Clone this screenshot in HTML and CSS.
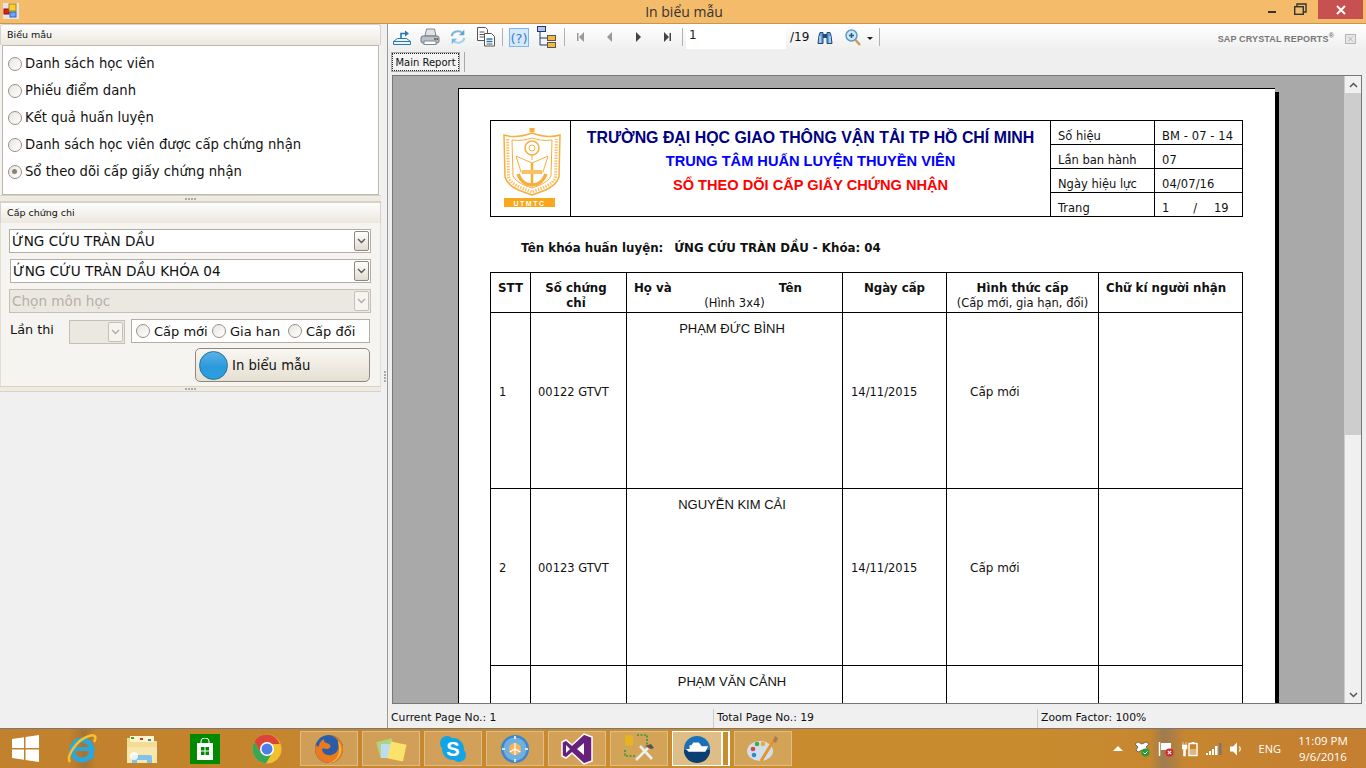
FILE: index.html
```html
<!DOCTYPE html>
<html lang="en">
<head>
  <meta charset="UTF-8" />
  <title>In biểu mẫu</title>
  <link rel="stylesheet" href="styles.css">
</head>
<body>
<div class="app">

  <!-- Title bar -->
  <div class="titlebar">
    <svg class="app-icon" width="16" height="16" viewBox="0 0 16 16"><rect x="0" y="0" width="16" height="16" fill="#e4e4e8"/><rect x="1" y="6" width="5" height="5" fill="#d22" stroke="#811"/><rect x="6" y="1" width="7" height="7" fill="#fc3" stroke="#a80"/><rect x="7" y="9" width="6" height="5" fill="#6af" stroke="#36a"/></svg>
    <div class="title">In biểu mẫu</div>
    <div class="win-btns">
      <svg class="win-min" width="26" height="20" viewBox="0 0 26 20"><rect x="9" y="11" width="8" height="2" fill="#333"/></svg>
      <svg class="win-max" width="26" height="20" viewBox="0 0 26 20"><path d="M10 7V4h9v8h-3" fill="none" stroke="#333" stroke-width="1.4"/><rect x="7.7" y="6.7" width="8.6" height="7.6" fill="none" stroke="#333" stroke-width="1.4"/></svg>
      <div class="win-close"><svg width="12" height="12" viewBox="0 0 12 12"><path d="M2 2l8 8M10 2l-8 8" stroke="#fff" stroke-width="2"/></svg></div>
    </div>
  </div>

  <div class="workspace">
    <!-- Left column -->
    <div class="sidebar">
      <div class="group-head">Biểu mẫu</div>
      <div class="form-list">
        <label class="radio-row"><span class="radio"></span>Danh sách học viên</label>
        <label class="radio-row"><span class="radio"></span>Phiếu điểm danh</label>
        <label class="radio-row"><span class="radio"></span>Kết quả huấn luyện</label>
        <label class="radio-row"><span class="radio"></span>Danh sách học viên được cấp chứng nhận</label>
        <label class="radio-row"><span class="radio checked"></span>Sổ theo dõi cấp giấy chứng nhận</label>
      </div>
      <div class="splitter"><i></i><i></i><i></i><i></i></div>

      <div class="group-head second">Cấp chứng chi</div>
      <div class="cert-body">
        <div class="combo">ỨNG CỨU TRÀN DẦU<span class="combo-btn"><svg width="9" height="6" viewBox="0 0 9 6"><path d="M1 1l3.5 3.5L8 1" fill="none" stroke="#555" stroke-width="1.3"/></svg></span></div>
        <div class="combo second-combo">ỨNG CỨU TRÀN DẦU KHÓA 04<span class="combo-btn"><svg width="9" height="6" viewBox="0 0 9 6"><path d="M1 1l3.5 3.5L8 1" fill="none" stroke="#555" stroke-width="1.3"/></svg></span></div>
        <div class="combo disabled">Chọn môn học<span class="combo-btn"><svg width="9" height="6" viewBox="0 0 9 6"><path d="M1 1l3.5 3.5L8 1" fill="none" stroke="#aaa" stroke-width="1.3"/></svg></span></div>
        <div class="exam-row">
          <span class="exam-label">Lần thi</span>
          <div class="combo disabled small"><span class="combo-btn"><svg width="9" height="6" viewBox="0 0 9 6"><path d="M1 1l3.5 3.5L8 1" fill="none" stroke="#aaa" stroke-width="1.3"/></svg></span></div>
          <div class="kind-box">
            <label class="kind"><span class="radio"></span>Cấp mới</label>
            <label class="kind"><span class="radio"></span>Gia han</label>
            <label class="kind"><span class="radio"></span>Cấp đổi</label>
          </div>
        </div>
        <div class="print-row">
          <button class="print-btn"><span class="orb"></span>In biểu mẫu</button>
        </div>
      </div>
      <div class="splitter last"><i></i><i></i><i></i><i></i></div>
    </div>

    <div class="vsplit"><i></i><i></i><i></i><i></i></div>

    <!-- Crystal report viewer -->
    <div class="viewer">
      <div class="toolbar">
        <span class="tool"><svg width="20" height="18" viewBox="0 0 20 18"><path d="M1.5 16.5h17v-3l-4-3h-9l-4 3z" fill="#eaf4fb" stroke="#2a78b0"/><path d="M1.5 13.5h17" stroke="#2a78b0"/><path d="M9 11V5.5h5" fill="none" stroke="#2a78b0" stroke-width="1.6"/><path d="M13 2.5l4 3-4 3z" fill="#2a78b0"/></svg></span>
        <span class="tool"><svg width="20" height="18" viewBox="0 0 20 18"><path d="M5 8l1.5-7h8L16 8z" fill="#dfe3e8" stroke="#7b8792"/><rect x="1" y="8" width="18" height="7" rx="2" fill="#b9c1c9" stroke="#6d7780"/><rect x="4" y="13" width="12" height="3.5" fill="#fff" stroke="#7b8792"/><rect x="14" y="10" width="2" height="2" fill="#3a9a48"/><rect x="16.5" y="10" width="1.5" height="2" fill="#c33"/></svg></span>
        <span class="tool"><svg width="18" height="18" viewBox="0 0 20 18"><path d="M3 8a7 6 0 0 1 12-3.5" fill="none" stroke="#7db8de" stroke-width="2.4"/><path d="M17 1v6h-6z" fill="#5fa3cf"/><path d="M17 10a7 6 0 0 1-12 3.5" fill="none" stroke="#a6d2ec" stroke-width="2.4"/><path d="M3 17v-6h6z" fill="#7db8de"/></svg></span>
        <span class="tool"><svg width="20" height="20" viewBox="0 0 20 20"><path d="M1.500.5h8l2 2v11h-10z" fill="#fff" stroke="#555"/><path d="M3.500 5h5M3.500 7.500h5M3.500 10h5" stroke="#555"/><path d="M8.500 6.500h7l3 3v9.500h-10z" fill="#fff" stroke="#555"/><path d="M10.500 12h6M10.500 14.500h6" stroke="#2a78b0" stroke-width="1.4"/><path d="M10.500 17h6" stroke="#555"/></svg></span>
        <span class="sep"></span>
        <span class="help-btn"><svg width="18" height="17" viewBox="0 0 18 17"><text x="9" y="14" text-anchor="middle" class="help-glyph">(?)</text></svg></span>
        <span class="tool tree"><svg width="20" height="22" viewBox="0 0 20 22"><rect x=".5" y=".5" width="8" height="5" fill="#b7c6e4" stroke="#1f3a6e"/><path d="M3 6v13h7M3 12h7" fill="none" stroke="#1f3a6e"/><rect x="10.500" y="9.500" width="8" height="5" fill="#f5b93f" stroke="#555"/><rect x="10.500" y="16.500" width="8" height="5" fill="#f5b93f" stroke="#555"/></svg></span>
        <span class="sep tree-sep"></span>
        <span class="nav n-first"><svg width="8" height="10" viewBox="0 0 8 10"><path d="M0 1h1.500v8H0zM7 0v10L2 5z" fill="#9a9a9a"/></svg></span>
        <span class="nav"><svg width="8" height="10" viewBox="0 0 8 10"><path d="M6 0v10L1 5z" fill="#9a9a9a"/></svg></span>
        <span class="nav"><svg width="8" height="10" viewBox="0 0 8 10"><path d="M2 0v10l5-5z" fill="#444"/></svg></span>
        <span class="nav"><svg width="8" height="10" viewBox="0 0 8 10"><path d="M1 0v10l5-5zM6.500 1H8v8H6.500z" fill="#444"/></svg></span>
        <span class="sep nav-sep"></span>
        <span class="page-input">1</span>
        <span class="page-total">/19</span>
        <span class="tool find"><svg width="16" height="15" viewBox="0 0 16 15"><path d="M1 13.500l1-8 1-3h3v11zM15 13.500l-1-8-1-3h-3v11z" fill="#6aa3d6" stroke="#1d4a80"/><path d="M3 6v7M13 6v7" stroke="#cfe4f5" stroke-width="1.200"/><rect x="6" y="4" width="4" height="4" fill="#1d4a80"/></svg></span>
        <span class="tool zoom-tool"><svg width="16" height="17" viewBox="0 0 16 17"><circle cx="6.500" cy="6.500" r="5.500" fill="#cfe6f7" stroke="#5f9cc8" stroke-width="1.500"/><path d="M4 6.500h5M6.500 4v5" stroke="#23598c" stroke-width="1.500"/><path d="M10.500 11l4.500 5" stroke="#d59a4e" stroke-width="2.500"/></svg></span>
        <span class="drop-arrow"></span>
        <span class="sep zoom-sep"></span>
        <span class="brand">SAP CRYSTAL REPORTS<sup>®</sup></span>
        <svg class="close-x" width="11" height="10" viewBox="0 0 11 10"><rect x=".5" y=".5" width="10" height="9" fill="#e8e8e8" stroke="#b5b5b5"/><path d="M3 2.500l5 5M8 2.500l-5 5" stroke="#b5b5b5"/></svg>
      </div>

      <div class="tabs">
        <span class="tab">Main Report</span>
        <span class="tab-sep"></span>
      </div>

      <div class="canvas">
        <div class="scroll-area">
          <div class="page">
            <table class="doc-head">
              <colgroup><col class="c-logo"><col class="c-title"><col class="c-key"><col class="c-val"></colgroup>
              <tr>
                <td rowspan="4" class="logo-cell">
                  <svg width="60" height="80" viewBox="0 0 60 80">
                    <g fill="none" stroke="#f7ae3c">
                      <path d="M2 7c10 3 20 1 28-2 8 3 18 5 28 2l-1 42c-3 10-15 14-27 18C18 63 6 59 3 49z" stroke-width="1.500"/>
                      <path d="M5.500 11l1 38c3 8 13 11 23.500 15 10-4 21-7 23.500-15l1-38" stroke-width="3" stroke-dasharray="1.500 1.200" opacity=".75"/>
                      <path d="M10 12c7 1 14 0 20-2 6 2 13 3 20 2l-1 36c-3 6-10 9-19 12-9-3-16-6-19-12z" stroke-width="1"/>
                      <circle cx="30" cy="20" r="7" stroke-width="1.500"/>
                      <circle cx="30" cy="20" r="3" stroke-width="1"/>
                      <path d="M30 27v5M14 28l16 7 16-7-5 16H19z" stroke-width="1"/>
                      <path d="M16 46c3 8 9 11 14 11s11-3 14-11" stroke-width="3.500"/>
                      <path d="M30 35v22" stroke-width="2.500"/>
                    </g>
                    <path d="M27.500 0h5v4h-5z" fill="#f7ae3c"/>
                    <rect x="20" y="42" width="20" height="4" fill="#f8c265"/>
                    <rect x="2" y="70" width="51" height="9" fill="#f9a81e"/>
                    <text x="27.500" y="77.500" text-anchor="middle" class="logo-text">UTMTC</text>
                  </svg>
                </td>
                <td rowspan="4" class="title-cell">
                  <div class="t1">TRƯỜNG ĐẠI HỌC GIAO THÔNG VẬN TẢI TP HỒ CHÍ MINH</div>
                  <div class="t2">TRUNG TÂM HUẤN LUYỆN THUYỀN VIÊN</div>
                  <div class="t3">SỔ THEO DÕI CẤP GIẤY CHỨNG NHẬN</div>
                </td>
                <td class="key">Số hiệu</td><td class="val">BM - 07 - 14</td>
              </tr>
              <tr><td class="key">Lần ban hành</td><td class="val">07</td></tr>
              <tr><td class="key">Ngày hiệu lực</td><td class="val">04/07/16</td></tr>
              <tr><td class="key">Trang</td><td class="val">1 <span class="slash">/</span> 19</td></tr>
            </table>

            <div class="course"><span>Tên khóa huấn luyện:</span><span>ỨNG CỨU TRÀN DẦU - Khóa: 04</span></div>

            <table class="doc-list">
              <colgroup><col class="l1"><col class="l2"><col class="l3"><col class="l4"><col class="l5"><col class="l6"></colgroup>
              <tr class="list-head">
                <th class="h-stt">STT</th>
                <th class="h-no">Số chứng<br>chỉ</th>
                <th><div class="name-head"><span>Họ và</span><span>Tên</span></div><div class="sub">(Hình 3x4)</div></th>
                <th class="h-date">Ngày cấp</th>
                <th>Hình thức cấp<div class="sub">(Cấp mới, gia hạn, đổi)</div></th>
                <th class="h-sign">Chữ kí người nhận</th>
              </tr>
              <tr class="row">
                <td class="stt">1</td><td class="no">00122 GTVT</td><td class="name">PHẠM ĐỨC BÌNH</td><td class="date">14/11/2015</td><td class="kind-val">Cấp mới</td><td></td>
              </tr>
              <tr class="row tall">
                <td class="stt">2</td><td class="no">00123 GTVT</td><td class="name">NGUYỄN KIM CẢI</td><td class="date">14/11/2015</td><td class="kind-val">Cấp mới</td><td></td>
              </tr>
              <tr class="row">
                <td class="stt"></td><td class="no"></td><td class="name">PHẠM VĂN CẢNH</td><td class="date"></td><td class="kind-val"></td><td></td>
              </tr>
            </table>
          </div>
        </div>
        <div class="scrollbar">
          <span class="arrow"><svg width="9" height="6" viewBox="0 0 9 6"><path d="M1 5l3.500-3.500L8 5" fill="none" stroke="#555" stroke-width="1.500"/></svg></span>
          <span class="thumb"></span>
          <span class="track"></span>
          <span class="arrow"><svg width="9" height="6" viewBox="0 0 9 6"><path d="M1 1l3.500 3.500L8 1" fill="none" stroke="#555" stroke-width="1.500"/></svg></span>
        </div>
      </div>

      <div class="statusbar">
        <span class="st st1">Current Page No.: 1</span>
        <span class="st st2">Total Page No.: 19</span>
        <span class="st st3">Zoom Factor: 100%</span>
      </div>
    </div>
  </div>

  <!-- Windows taskbar -->
  <div class="taskbar">
    <svg class="pin start" width="27" height="27" viewBox="0 0 27 27"><path d="M0 4l12-1.700V13H0zM13.500 2.100L27 0v13H13.500zM0 14.500h12v10.200L0 23zM13.500 14.500H27V27l-13.500-2z" fill="#fff"/></svg>
    <svg class="pin ie" width="30" height="32" viewBox="0 0 30 32"><circle cx="15" cy="17" r="10" fill="none" stroke="#29a8e0" stroke-width="5"/><path d="M6 16h19" stroke="#29a8e0" stroke-width="4"/><path d="M20 23h8l-3 3-5 1z" fill="#29a8e0"/><path d="M3 29C-1 24 9 7 22 3c6-2 8 1 5 6" fill="none" stroke="#f2c230" stroke-width="2.500"/></svg>
    <svg class="pin folder" width="32" height="30" viewBox="0 0 32 30"><path d="M1 4h11l2 3h17v22H1z" fill="#f3dc94"/><rect x="4" y="2" width="24" height="6" fill="#fff3c9"/><rect x="5" y="3" width="3" height="2" fill="#3a3"/><rect x="14" y="4" width="3" height="2" fill="#c33"/><rect x="22" y="5" width="3" height="2" fill="#38c"/><path d="M1 13h30v16H1z" fill="#f7e7ae"/><path d="M6 29v-6q0-2 2-2h16q2 0 2 2v6h-5v-3H11v3z" fill="#7fc3ea"/><circle cx="8" cy="22" r="4" fill="#fff" opacity=".8"/></svg>
    <div class="pin store"><svg width="16" height="22" viewBox="0 0 16 22"><path d="M4 6V3a4 3 0 0 1 8 0v3" fill="none" stroke="#fff"/><path d="M0 5l16 0v17H0z" fill="#fff"/><rect x="4" y="9" width="3.500" height="3.500" fill="#008a00"/><rect x="8.500" y="9" width="3.500" height="3.500" fill="#008a00"/><rect x="4" y="13.500" width="3.500" height="3.500" fill="#008a00"/><rect x="8.500" y="13.500" width="3.500" height="3.500" fill="#008a00"/></svg></div>
    <svg class="pin chrome" width="30" height="30" viewBox="0 0 30 30"><circle cx="15" cy="15" r="14.500" fill="#f2c12e"/><path d="M15 .5A14.500 14.500 0 0 0 2.400 7.700L9 19l6-9h12.800A14.500 14.500 0 0 0 15 .5z" fill="#db4437"/><path d="M2.400 7.700A14.500 14.500 0 0 0 14 29.500L20 19H9z" fill="#3aa757"/><circle cx="15" cy="15" r="7" fill="#fff"/><circle cx="15" cy="15" r="5.500" fill="#4a7fe8"/></svg>

    <div class="task first-task"><svg width="30" height="30" viewBox="0 0 30 30"><circle cx="15" cy="15" r="14" fill="#2a5ca8"/><path d="M15 1a14 14 0 1 1-13 9c1 3 2 3 3 2 0-3 3-6 5-7-1 3 2 4 5 5 3 2 1 5-2 5-2 0-3-1-5 0 0 4 5 7 9 6 5-1 8-5 8-10 0-5-4-9-10-10z" fill="#ea7a20"/><path d="M24 7c3 3 4 8 3 12-2 6-7 10-12 10 7-2 10-8 10-13 0-3-1-6-1-9z" fill="#f5b32e"/></svg></div>
    <div class="task"><svg width="32" height="28" viewBox="0 0 32 28"><rect x="3" y="5" width="16" height="16" fill="#a9e08a" opacity=".8" transform="rotate(-15 11 13)"/><rect x="6" y="9" width="15" height="14" fill="#bcdcf5"/><rect x="14" y="8" width="16" height="17" fill="#fbe26a" transform="rotate(12 22 16)"/></svg></div>
    <div class="task"><svg width="28" height="28" viewBox="0 0 28 28"><circle cx="8" cy="8" r="7" fill="#12a5e6"/><circle cx="20" cy="20" r="7" fill="#12a5e6"/><circle cx="14" cy="14" r="11" fill="#12a5e6"/><text x="14" y="21" text-anchor="middle" class="skype-s">S</text></svg></div>
    <div class="task"><svg width="30" height="30" viewBox="0 0 30 30"><circle cx="15" cy="15" r="14" fill="#3f87c8"/><circle cx="15" cy="15" r="11.500" fill="#6fb0e0"/><circle cx="15" cy="15" r="6" fill="#f6b55a"/><path d="M15 9v12M9.500 18L15 15l5.500 3" stroke="#fff" stroke-width="1.200" fill="none"/><path d="M15 2v3M15 25v3M2 15h3M25 15h3" stroke="#fff" stroke-width="1.500"/></svg></div>
    <div class="task"><svg width="32" height="32" viewBox="0 0 32 32"><path d="M23 1l8 3v24l-8 3-12-11-6 5-4-2V9l4-2 6 5z" fill="#68217a" stroke="#fff" stroke-width="1.500"/><path d="M23 10v12l-7-6zM5 12v8l4-4z" fill="#fff"/></svg></div>
    <div class="task"><svg width="32" height="32" viewBox="0 0 32 32"><ellipse cx="6" cy="3.500" rx="4" ry="1.500" fill="#e6b422"/><rect x="2" y="3.500" width="8" height="9" fill="#e6b422"/><path d="M14 2h10v10M2 17v6h10" fill="none" stroke="#2e9a3e" stroke-width="1.600" stroke-dasharray="2 1.500"/><path d="M13 27l12-12M17 13l12 13" stroke="#eee" stroke-width="2.600"/><path d="M22 13l6-2 3 4-3 1z" fill="#555"/></svg></div>
    <div class="task current"><svg width="28" height="28" viewBox="0 0 30 30"><circle cx="15" cy="15" r="14" fill="#1b71b8"/><path d="M1 16h28a14 14 0 0 1-28 0z" fill="#0b3f73"/><path d="M3 15l3 3h18l3-6h-7l-3-4h-6l-2 3H7v4z" fill="#fff"/></svg></div>
    <div class="stack"></div>
    <div class="task"><svg width="32" height="30" viewBox="0 0 32 30"><ellipse cx="13" cy="17" rx="13" ry="10" fill="#cfe0ec"/><circle cx="6" cy="15" r="2.300" fill="#d44"/><circle cx="10" cy="10" r="2.300" fill="#4a4"/><circle cx="16" cy="10" r="2.300" fill="#ea3"/><circle cx="7" cy="21" r="2.300" fill="#38c"/><path d="M14 27L27 6" stroke="#e8922e" stroke-width="3"/><path d="M26 7l2-5 3 2-2 5z" fill="#a87c50"/></svg></div>

    <div class="tray">
      <svg class="tray-caret" width="10" height="5" viewBox="0 0 10 5"><path d="M0 5l5-5 5 5z" fill="#fff"/></svg>
      <svg class="tray-icon" width="16" height="16" viewBox="0 0 16 16"><path d="M1 3l3-2 4 2 4-2 3 2-3 3 2 3-3 2-3-2-4 2-2-2 2-3z" fill="#fff" stroke="#333" stroke-width=".6"/><circle cx="11.500" cy="11.500" r="4" fill="#2b9a36"/><path d="M9.500 11.500l1.500 1.500 2.500-2.500" fill="none" stroke="#fff"/></svg>
      <svg class="tray-icon" width="16" height="16" viewBox="0 0 16 16"><path d="M1.500 1v14" stroke="#fff" stroke-width="1.500"/><path d="M3 2h10v7H3z" fill="#fff"/><circle cx="11.500" cy="11.500" r="4" fill="#d8242f"/><path d="M9.800 9.800l3.400 3.400M13.200 9.800l-3.400 3.400" stroke="#fff" stroke-width="1.200"/></svg>
      <svg class="tray-icon" width="16" height="16" viewBox="0 0 16 16"><path d="M1 1v3M4 1v3M0 4h5v4H3.500v7H1.500V8H0z" fill="#fff" stroke="#fff" stroke-width=".6"/><rect x="7" y="2.500" width="8" height="12" fill="none" stroke="#fff" stroke-width="1.400"/><rect x="9.500" y="1" width="3" height="1.500" fill="#fff"/><rect x="8" y="8" width="6" height="6" fill="#fff" opacity=".4"/></svg>
      <svg class="tray-icon" width="16" height="14" viewBox="0 0 16 14"><rect x="0" y="11" width="2" height="2" fill="#fff"/><rect x="3" y="9" width="2" height="4" fill="#fff"/><rect x="6" y="7" width="2" height="6" fill="#fff"/><rect x="9" y="4" width="2.500" height="9" fill="#fff"/><rect x="13" y="1" width="2.500" height="12" fill="#777"/></svg>
      <svg class="tray-icon" width="14" height="14" viewBox="0 0 14 14"><path d="M0 4.500h3l4-4v13l-4-4H0z" fill="#fff"/><path d="M9.500 4.500q1.500 2.500 0 5" fill="none" stroke="#fff" stroke-width="1.200"/></svg>
      <span class="lang">ENG</span>
      <span class="clock"><span>11:09 PM</span><span>9/6/2016</span></span>
    </div>
  </div>
</div>
</body>
</html>
```

FILE: styles.css
```css
* { margin: 0; padding: 0; box-sizing: border-box; }
html, body { width: 1366px; height: 768px; overflow: hidden; }
body {
  font-family: 'DejaVu Sans', sans-serif;
  font-size: 13px;
  color: #111;
  background: #f0f0f0;
}
.app {
  width: 1366px;
  height: 768px;
  display: flex;
  flex-direction: column;
}

/* --- Title bar --- */
.titlebar {
  height: 24px;
  background: #f4bb6b;
  border-bottom: 1px solid #c9964f;
  display: flex;
  align-items: center;
  padding-left: 3px;
  position: relative;
}
.app-icon { margin-top: -2px; }
.title {
  flex: 1;
  text-align: center;
  font-family: 'Open Sans', sans-serif;
  font-size: 14px;
  color: #333;
  margin-right: 17px;
}
.win-btns {
  position: absolute;
  right: 3px;
  top: 0;
  display: flex;
  align-items: flex-start;
}
.win-min { margin-right: 2px; }
.win-max { margin-right: 5px; }
.win-close {
  width: 45px;
  height: 19px;
  background: #c75050;
  display: flex;
  align-items: center;
  justify-content: center;
}

/* --- Layout --- */
.workspace {
  flex: 1;
  display: flex;
  min-height: 0;
  background: #f0f0f0;
}
.sidebar { width: 384px; }
.vsplit {
  width: 3px;
  display: flex;
  flex-direction: column;
  justify-content: center;
  gap: 1px;
  height: 704px;
}
.vsplit i { width: 2px; height: 2px; background: #aaa; display: block; }

/* --- Left column --- */
.group-head {
  height: 21px;
  width: 381px;
  padding: 2px 0 0 6px;
  font-size: 9.500px;
  background: linear-gradient(#fdfdfc, #ece8df);
  border: 1px solid #d8d2c6;
  border-bottom: none;
  border-radius: 3px 3px 0 0;
  line-height: 15px;
}
.form-list {
  width: 377px;
  height: 150px;
  margin-left: 2px;
  background: #fff;
  border: 1px solid #bdb6aa;
  padding-top: 4px;
  box-shadow: -2px 0 0 #f5f3ef, 2px 0 0 #f5f3ef;
}
.radio-row {
  height: 27px;
  display: flex;
  align-items: center;
  padding-left: 5px;
  font-size: 13.200px;
  gap: 3px;
}
.radio {
  width: 14px;
  height: 14px;
  border-radius: 50%;
  border: 1.500px solid #9a8f84;
  background: linear-gradient(135deg, #e8e5df, #fff);
  display: inline-block;
  flex: none;
  position: relative;
}
.radio.checked::after {
  content: "";
  position: absolute;
  left: 3px;
  top: 3px;
  width: 5px;
  height: 5px;
  border-radius: 50%;
  background: #8a8078;
}
.splitter {
  height: 7px;
  width: 381px;
  background: #efebe2;
  border-bottom: 1px solid #d8d2c6;
  border-top: 1px solid #d8d2c6;
  display: flex;
  justify-content: center;
  align-items: center;
  gap: 1px;
}
.splitter i { width: 2px; height: 2px; background: #aaa; display: block; }
.splitter.last { height: 6px; }
.group-head.second { border-radius: 0; }
.cert-body {
  width: 381px;
  height: 163px;
  background: #f6f4f0;
  border-left: 1px solid #e4dfd6;
  border-right: 1px solid #e4dfd6;
  padding: 6px 0 0 8px;
  display: flex;
  flex-direction: column;
}
.combo {
  width: 362px;
  height: 24px;
  background: #fff;
  border: 1px solid #b4aea4;
  font-size: 13.600px;
  line-height: 22px;
  padding-left: 2px;
  position: relative;
  margin-bottom: 6px;
}
.second-combo { margin-left: 1px; width: 361px; }
.combo-btn {
  position: absolute;
  right: 1px;
  top: 1px;
  width: 15px;
  height: 20px;
  border: 1px solid #8f887e;
  border-radius: 2px;
  background: linear-gradient(#fff, #e2dccf);
  display: flex;
  align-items: center;
  justify-content: center;
}
.combo.disabled {
  background: #ebe8e1;
  color: #b5b0a8;
  border-color: #c5c0b6;
}
.combo.disabled .combo-btn { border-color: #c5c0b6; background: #f6f4ef; }
.exam-row {
  display: flex;
  align-items: flex-start;
  height: 29px;
}
.exam-label { width: 60px; padding: 3px 0 0 1px; font-size: 12.800px; }
.combo.small { width: 56px; height: 24px; margin-top: 1px; margin-bottom: 0; }
.kind-box {
  width: 239px;
  height: 24px;
  margin-left: 6px;
  background: #fff;
  border: 1px solid #b4aea4;
  display: flex;
  align-items: center;
  padding-left: 4px;
  font-size: 13px;
}
.kind {
  display: flex;
  align-items: center;
  gap: 4px;
  white-space: nowrap;
  width: 76px;
}
.print-row { display: flex; padding-left: 186px; }
.print-btn {
  width: 175px;
  height: 34px;
  border: 1px solid #8f887e;
  border-radius: 5px;
  background: linear-gradient(#f9f7f2, #e6e0d3);
  font-family: inherit;
  font-size: 13.200px;
  color: #111;
  display: flex;
  align-items: center;
  gap: 4px;
  padding-left: 3px;
}
.orb {
  width: 29px;
  height: 29px;
  border-radius: 50%;
  border: 1px solid #2a6f96;
  background: linear-gradient(#5cb0e8, #2b9adb 55%, #2c9fe0);
}

/* --- Viewer --- */
.viewer {
  flex: 1;
  min-width: 0;
  height: 704px;
  display: flex;
  flex-direction: column;
  border-left: 1px solid #9a9a9a;
  background: #efefef;
}
.toolbar {
  height: 26px;
  background: linear-gradient(#fff, #efefef);
  display: flex;
  align-items: center;
  position: relative;
}
.tool {
  width: 28px;
  display: flex;
  justify-content: center;
}
.sep { width: 1px; height: 18px; background: #b0b0b0; flex: none; margin: 0 6px 0 2px; }
.help-btn {
  width: 20px;
  height: 19px;
  background: #d6e9fa;
  border: 1px solid #7fb5e8;
  display: flex;
  align-items: center;
  justify-content: center;
}
.help-glyph { font-family: 'DejaVu Sans', sans-serif; font-size: 13px; fill: #3a7fd0; }
.tree { width: 35px; }
.tree-sep { margin: 0; }
.nav { width: 28.500px; display: flex; justify-content: center; }
.n-first { margin-left: 2px; }
.nav-sep { margin: 0 3px 0 1px; }
.page-input {
  width: 100px;
  height: 24px;
  background: #fff;
  font-size: 12px;
  line-height: 21px;
  padding-left: 3px;
  color: #222;
}
.page-total { width: 24px; padding-left: 4px; font-size: 12px; }
.find { width: 32px; margin-left: -1px; }
.zoom-tool { width: 24px; }
.drop-arrow {
  width: 0;
  height: 0;
  border-left: 3px solid transparent;
  border-right: 3px solid transparent;
  border-top: 3px solid #222;
  margin: 2px 0 0 2px;
}
.zoom-sep { margin-left: 6px; }
.brand {
  position: absolute;
  right: 32px;
  top: 10px;
  font-family: 'Liberation Sans', sans-serif;
  font-weight: bold;
  font-size: 9px;
  color: #777;
  letter-spacing: .15px;
}
.brand sup { font-size: 7px; line-height: 0; }
.close-x { position: absolute; right: 10px; top: 10px; }
.tabs {
  height: 25px;
  display: flex;
  align-items: flex-start;
  background: #efefef;
  padding-left: 4px;
}
.tab {
  height: 18px;
  width: 67px;
  margin-top: 3px;
  padding: 2px 0 0;
  text-align: center;
  border: 1px dotted #222;
  box-shadow: 0 0 0 1px #aaa;
  font-size: 10px;
  line-height: 14px;
  white-space: nowrap;
  background: #f4f4f4;
}
.tab-sep { width: 1px; height: 20px; background: #aaa; margin: 2px 0 0 5px; }
.canvas {
  flex: 1;
  margin: 0 4px 5px 4px;
  border: 1px solid #777;
  background: #a9a9a9;
  display: flex;
  min-height: 0;
  overflow: hidden;
}
.scroll-area { flex: 1; min-width: 0; overflow: hidden; padding: 12px 0 0 65px; }
.page {
  width: 817px;
  height: 900px;
  background: #fff;
  border: 1px solid #000;
  border-right: none;
  box-shadow: 4px 4px 0 #000;
  padding: 31px 0 0 31px;
}
.scrollbar { width: 17px; background: #f0f0f0; display: flex; flex-direction: column; border-left: 1px solid #ccc; }
.arrow { height: 17px; display: flex; align-items: center; justify-content: center; }
.thumb { height: 342px; background: #cdcdcd; }
.track { flex: 1; }

/* --- Report --- */
table { border-collapse: collapse; table-layout: fixed; }
td, th { border: 1px solid #000; }
.doc-head { width: 753px; font-size: 11.500px; }
.c-logo { width: 80px; }
.c-title { width: 480px; }
.c-key { width: 104px; }
.c-val { width: 88px; }
.doc-head tr { height: 24px; }
.logo-cell { padding: 7px 0 0 11px; vertical-align: top; line-height: 0; }
.logo-text { font-family: 'Liberation Sans', sans-serif; font-weight: bold; font-size: 7px; fill: #fff; letter-spacing: 1.500px; }
.title-cell {
  vertical-align: top;
  text-align: center;
  font-family: 'Liberation Sans', sans-serif;
  font-weight: bold;
  padding-top: 6px;
}
.t1 { font-size: 15.900px; color: #000080; line-height: 22px; }
.t2 { font-size: 14.600px; color: #0000ff; line-height: 24px; }
.t3 { font-size: 14.600px; color: #ff0000; line-height: 24px; }
.key { padding: 7px 0 0 7px; line-height: 14px; }
.val { padding: 7px 0 0 7px; line-height: 14px; letter-spacing: .1px; }
.slash { margin: 0 13px 0 20px; }
.course {
  display: flex;
  font-size: 11.800px;
  font-weight: bold;
  padding: 24px 0 0 31px;
  height: 55px;
  gap: 11px;
}
.doc-list { width: 753px; font-size: 11.500px; }
.l1 { width: 40px; }
.l2 { width: 96px; }
.l3 { width: 216px; }
.l4 { width: 104px; }
.l5 { width: 152px; }
.l6 { width: 144px; }
.list-head { height: 40px; }
.list-head th { font-size: 11.800px; line-height: 15px; vertical-align: top; padding-top: 8px; }
.h-no { padding-right: 5px; }
.h-sign { white-space: nowrap; text-align: left; padding-left: 7px; }
.name-head { display: flex; justify-content: space-between; padding: 0 40px 0 7px; }
.sub { font-weight: normal; font-size: 11.500px; line-height: 15px; }
.row { height: 176px; }
.row.tall { height: 177px; }
.row td { vertical-align: middle; padding-bottom: 18px; }
.stt { padding-left: 8px; }
.no { padding-left: 7px; white-space: nowrap; }
.date { padding-left: 8px; }
.kind-val { padding-left: 23px; font-size: 12px; }
.row .name {
  vertical-align: top;
  text-align: center;
  padding: 8px 5px 0 0;
  font-family: 'Liberation Sans', sans-serif;
  font-size: 13px;
}

/* --- Taskbar --- */
.taskbar {
  height: 40px;
  background:
    linear-gradient(90deg, transparent 1150px, rgba(110, 110, 120, .45) 1163px, rgba(110, 110, 120, .3) 1172px, transparent 1185px),
    linear-gradient(90deg, transparent 70px, rgba(110, 90, 60, .35) 85px, transparent 96px),
    linear-gradient(90deg, #c1802d, #c98d2f 50%, #c88c2e 75%, #c47e30);
  border-top: 1px solid #777;
  display: flex;
  align-items: center;
  color: #fff;
}
.pin { flex: none; }
.start { margin-left: 12px; }
.ie { margin-left: 28px; }
.folder { margin-left: 29px; }
.store {
  margin-left: 32px;
  width: 30px;
  height: 30px;
  background: #008a00;
  display: flex;
  align-items: center;
  justify-content: center;
}
.chrome { margin-left: 32px; }
.task {
  width: 58px;
  height: 35px;
  flex: none;
  margin-left: 4px;
  background: rgba(255, 255, 255, .2);
  border: 1px solid rgba(255, 255, 255, .3);
  display: flex;
  align-items: center;
  justify-content: center;
}
.first-task { margin-left: 18px; }
.skype-s { font-family: 'Liberation Sans', sans-serif; font-weight: bold; font-size: 20px; fill: #fff; }
.task.current {
  width: 50px;
  background: rgba(255, 255, 255, .42);
  border: 1px solid #fff;
}
.stack {
  width: 8px;
  height: 35px;
  flex: none;
  border-right: 2px solid #fff;
  border-left: 1px solid #fff;
  border-top: 1px solid #fff;
  border-bottom: 1px solid #fff;
}
.tray {
  margin-left: auto;
  display: flex;
  align-items: center;
  height: 100%;
}
.tray-caret { margin-right: 11px; }
.tray-icon { margin-right: 8px; }
.lang { font-size: 11px; margin: 0 6px 0 7px; font-family: 'Open Sans', sans-serif; }
.clock {
  width: 72px;
  display: flex;
  flex-direction: column;
  align-items: center;
  font-family: 'Open Sans', sans-serif;
  font-size: 11.500px;
  line-height: 16px;
  margin-right: 7px;
}

/* --- Status bar --- */
.statusbar {
  height: 19px;
  display: flex;
  align-items: center;
  font-size: 10.800px;
  background: #f0f0f0;
}
.st { padding-left: 3px; height: 100%; line-height: 18px; border-right: 1px solid #ccc; }
.st1 { width: 326px; }
.st2 { width: 324px; }
.st3 { border-right: none; }
```
